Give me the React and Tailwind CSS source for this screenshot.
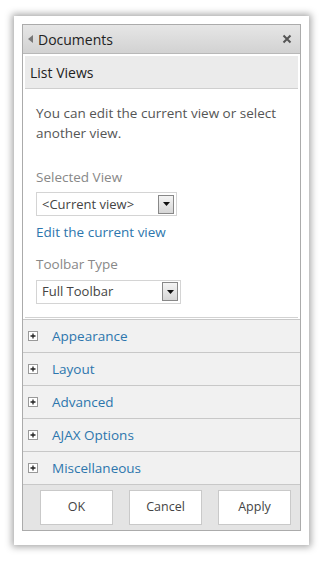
import React from "react";

const font = { fontFamily: '"Open Sans", "Noto Sans", sans-serif' };

function Select({ value, width }) {
  return (
    <div className={`flex items-center h-[24px] ${width} border border-[#d4d4d4] bg-white pr-[2px]`}>
      <span className="flex-1 pl-[5px] text-[13px] text-[#444] leading-none">{value}</span>
      <div className="flex items-center justify-center w-[16px] h-[19px] border border-[#888] bg-gradient-to-b from-[#f4f4f4] to-[#d6d6d6]">
        <svg width="7" height="4" viewBox="0 0 7 4"><path d="M0 0h7L3.5 4z" fill="#111" /></svg>
      </div>
    </div>
  );
}

function Row({ label }) {
  return (
    <div className="flex items-center h-[33px] border-t border-[#c8c8c8] bg-[#f1f1f1] pl-[5px]">
      <div className="flex items-center justify-center w-[10px] h-[10px] border border-[#999] bg-white">
        <svg width="6" height="6" viewBox="0 0 6 6"><path d="M3 0.5v5M0.5 3h5" stroke="#222" strokeWidth="1.3" /></svg>
      </div>
      <span className="ml-[14px] text-[13.5px] text-[#2d76ad]">{label}</span>
    </div>
  );
}

function Button({ label }) {
  return (
    <div className="flex items-center justify-center w-[73px] h-[35px] border border-[#c9c9c9] bg-white text-[12.5px] text-[#444]">
      {label}
    </div>
  );
}

export default function App() {
  return (
    <div className="w-[323px] h-[572px] bg-white pt-[16px] pl-[14px]" style={font}>
      <div className="w-[295px] h-[529px] bg-white shadow-[0_0_7px_2px_rgba(0,0,0,0.35)] p-[8px] pb-[14px]">
        <div className="flex flex-col h-full border border-[#ababab]">
          {/* header */}
          <div className="flex items-center h-[29px] bg-gradient-to-b from-[#e6e6e6] to-[#d2d2d2] border-b border-[#b8b8b8] pl-[5px] pr-[8px]">
            <svg width="5" height="8" viewBox="0 0 5 8"><path d="M5 0v8L0 4z" fill="#777" /></svg>
            <span className="ml-[5px] text-[14px] text-[#222] flex-1">Documents</span>
            <svg width="10" height="10" viewBox="0 0 10 10"><path d="M1.5 1.5l7 7M8.5 1.5l-7 7" stroke="#555" strokeWidth="2" /></svg>
          </div>

          {/* list views */}
          <div className="px-[2px] pt-[2px] pb-[1px]">
            <div className="flex items-center h-[33px] bg-[#ebebeb] border-b border-[#cfcfcf] pl-[5px] text-[14px] text-[#222]">
              List Views
            </div>
            <div className="px-[11px] pt-[14px] pb-[13px] border-b border-[#d2d2d2]">
              <p className="text-[13.5px] leading-[20px] text-[#555]">
                You can edit the current view or select another view.
              </p>
              <div className="mt-[24px] text-[13.5px] text-[#888]">Selected View</div>
              <div className="mt-[5px]"><Select value="<Current view>" width="w-[141px]" /></div>
              <div className="mt-[6px] text-[13.5px] text-[#2d76ad]">Edit the current view</div>
              <div className="mt-[11px] text-[13.5px] text-[#888]">Toolbar Type</div>
              <div className="mt-[6px]"><Select value="Full Toolbar" width="w-[145px]" /></div>
            </div>
          </div>

          {/* sections */}
          <div>
            <Row label="Appearance" />
            <Row label="Layout" />
            <Row label="Advanced" />
            <Row label="AJAX Options" />
            <Row label="Miscellaneous" />
          </div>

          {/* footer */}
          <div className="flex-1 flex items-center gap-[16px] border-t border-[#c8c8c8] bg-[#e4e4e4] pl-[17px]">
            <Button label="OK" />
            <Button label="Cancel" />
            <Button label="Apply" />
          </div>
        </div>
      </div>
    </div>
  );
}
